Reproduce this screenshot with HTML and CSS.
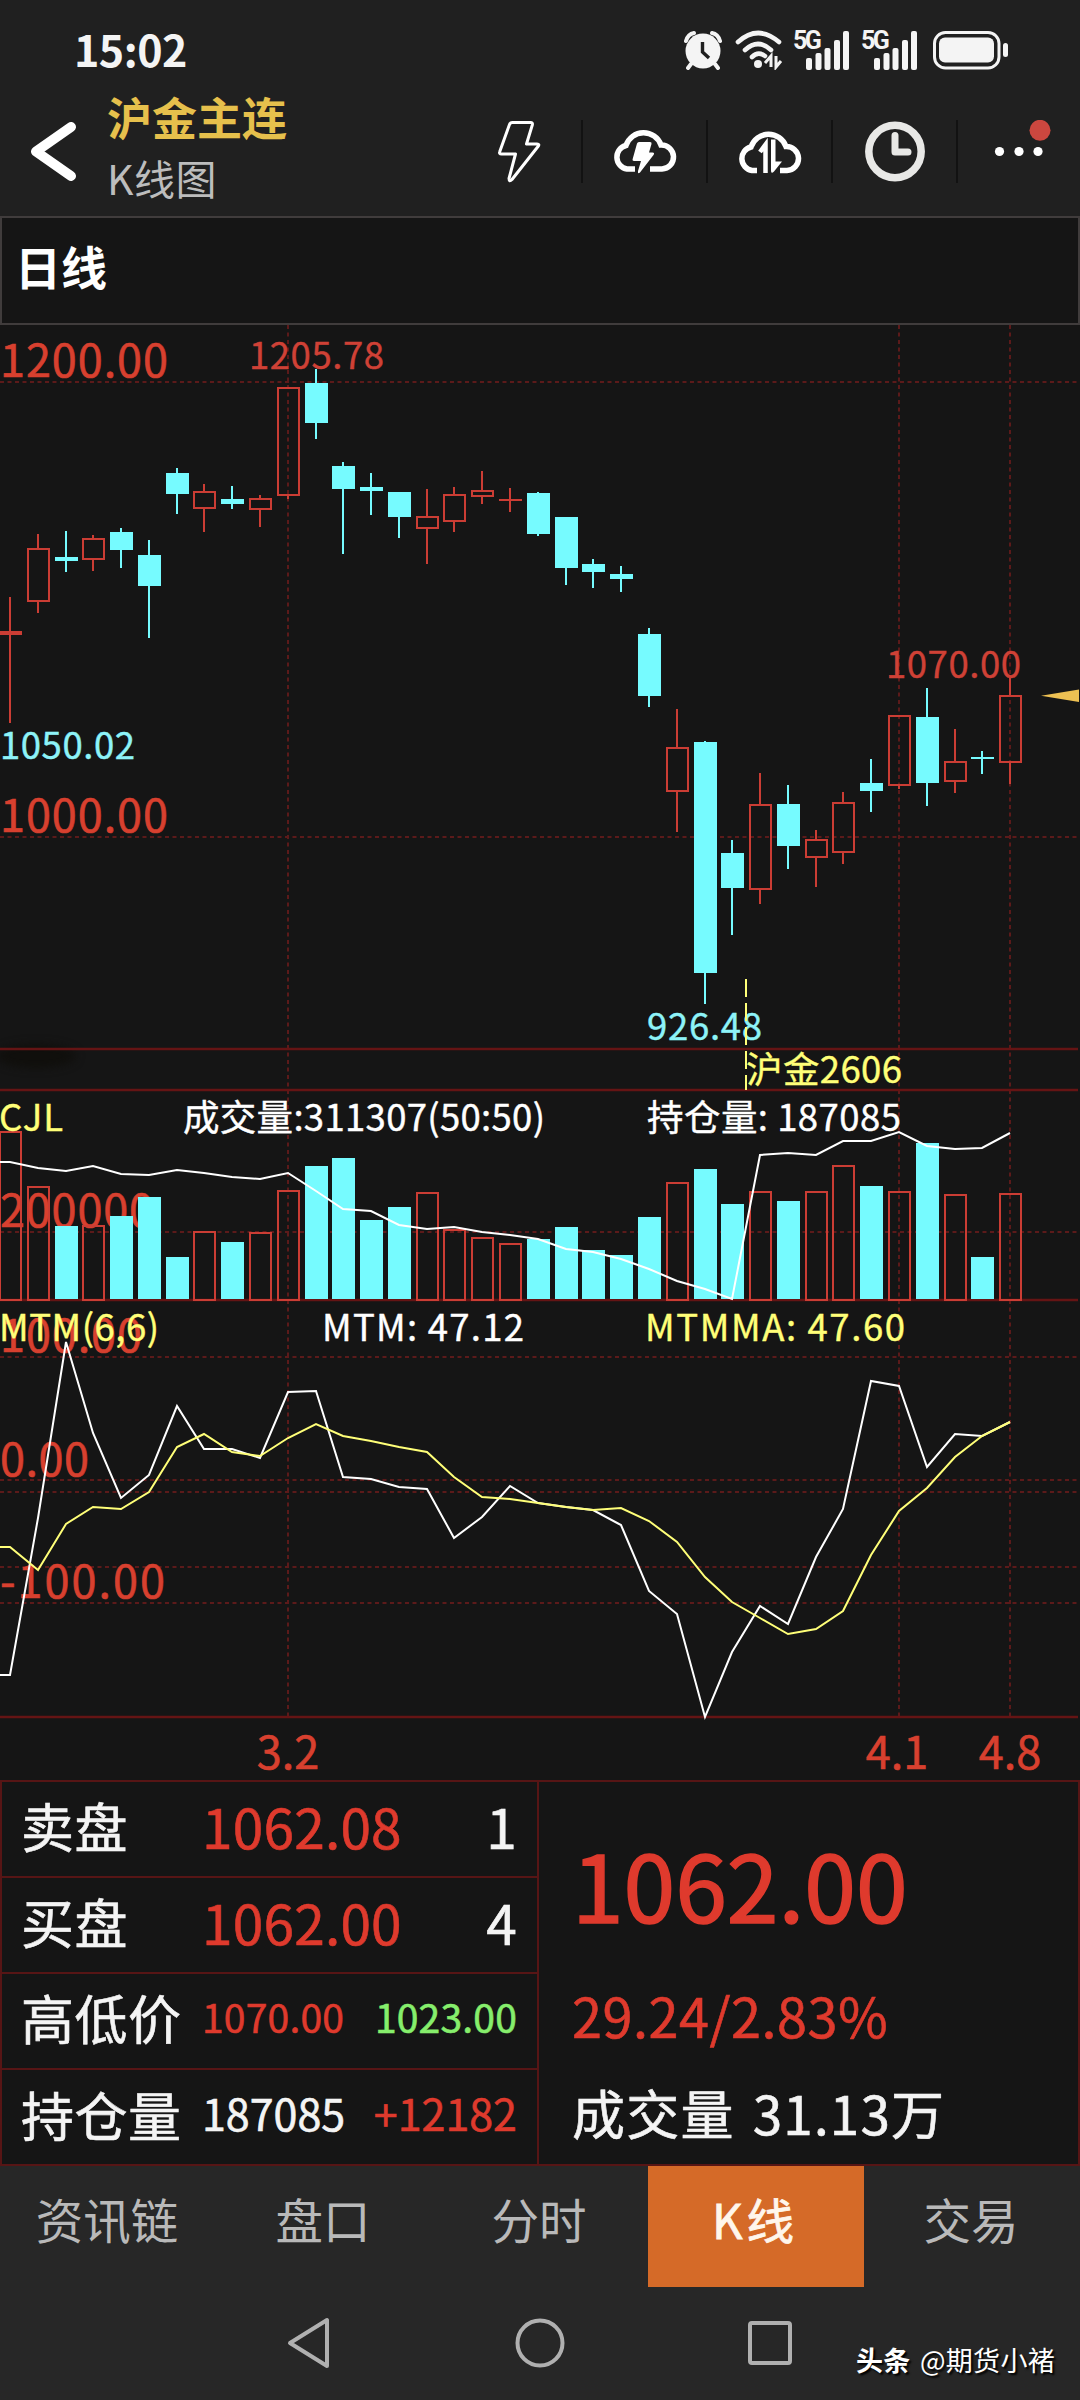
FILE: index.html
```html
<!DOCTYPE html>
<html lang="zh-CN">
<head>
    <meta charset="UTF-8">
    <meta name="viewport" content="width=device-width, initial-scale=1.0">
    <title>沪金主连 K线图</title>
    <link rel="stylesheet" href="styles.css">
</head>
<body>

    <!-- 状态栏 -->
    <div class="status-bar">
        <span class="time">15:02</span>
        <div class="status-icons">
            <svg class="alarm" width="38" height="40" viewBox="0 0 38 40">
                <circle cx="19" cy="21" r="17.5" fill="#f4f4f4"/>
                <path d="M2 11 Q4 4 10 3 M36 11 Q34 4 28 3" stroke="#f4f4f4" stroke-width="4" fill="none" stroke-linecap="round"/>
                <path d="M7 34 L4 38 M31 34 L34 38" stroke="#f4f4f4" stroke-width="4" stroke-linecap="round"/>
                <path d="M18.5 12 V22 L25 28" stroke="#202020" stroke-width="3.4" fill="none"/>
            </svg>
            <svg class="wifi" width="48" height="40" viewBox="0 0 48 40">
                <g fill="none" stroke="#f4f4f4" stroke-width="4.6" stroke-linecap="round">
                    <path d="M3 12 Q23 -6 44 12"/>
                    <path d="M10 20 Q23 8 36 20"/>
                    <path d="M17 27 Q23 21 30 26"/>
                </g>
                <circle cx="23" cy="34" r="4" fill="#f4f4f4"/>
                <path d="M30 33 L36 26 V37 M41 26 V37 L46 31" stroke="#f4f4f4" stroke-width="3" fill="none"/>
            </svg>
            <div class="signal">
                <span>5G</span>
                <svg width="44" height="40" viewBox="0 0 44 40" fill="#f4f4f4">
                    <rect x="0" y="28" width="6" height="12" rx="2"/>
                    <rect x="9.5" y="23" width="6" height="17" rx="2"/>
                    <rect x="18.5" y="18" width="6" height="22" rx="2"/>
                    <rect x="28" y="10" width="6" height="30" rx="2"/>
                    <rect x="37" y="1" width="6" height="39" rx="2"/>
                </svg>
            </div>
            <div class="signal">
                <span>5G</span>
                <svg width="44" height="40" viewBox="0 0 44 40" fill="#f4f4f4">
                    <rect x="0" y="28" width="6" height="12" rx="2"/>
                    <rect x="9.5" y="23" width="6" height="17" rx="2"/>
                    <rect x="18.5" y="18" width="6" height="22" rx="2"/>
                    <rect x="28" y="10" width="6" height="30" rx="2"/>
                    <rect x="37" y="1" width="6" height="39" rx="2"/>
                </svg>
            </div>
            <svg class="battery" width="76" height="40" viewBox="0 0 76 40">
                <rect x="1.5" y="2.5" width="64.5" height="35.5" rx="11" fill="none" stroke="#f4f4f4" stroke-width="3"/>
                <rect x="6" y="7.5" width="55" height="25" rx="6" fill="#f4f4f4"/>
                <rect x="70" y="13" width="5" height="14" rx="2.5" fill="#f4f4f4"/>
            </svg>
        </div>
    </div>

    <!-- 标题栏 -->
    <header class="header">
        <svg class="back" width="48" height="64" viewBox="0 0 48 64">
            <path d="M41 7 L6 31.500 L41 56" fill="none" stroke="#fff" stroke-width="10" stroke-linecap="round" stroke-linejoin="round"/>
        </svg>
        <div class="title">
            <h1>沪金主连</h1>
            <p>K线图</p>
        </div>
        <div class="tools">
            <div class="tool">
                <svg width="44" height="64" viewBox="0 0 44 64">
                    <path d="M14.500 2.500 H32.500 Q35 2.500 34.300 5 L28.500 24 H39 Q42 24 40 26.500 L14 59.500 Q11 62.500 11 58.500 L17.500 34 H3.500 Q0.800 34 1.800 31.500 L11.500 4.500 Q12.200 2.500 14.500 2.500 Z" fill="none" stroke="#fff" stroke-width="3" stroke-linejoin="round"/>
                </svg>
            </div>
            <div class="tool">
                <svg width="64" height="64" viewBox="1 1.500 64 64">
                    <path d="M23 50.500 H15 A12 12 0 0 1 14 27 A18.500 18.500 0 0 1 49 26.500 A12 12 0 0 1 50 50.500 H38" fill="none" stroke="#fff" stroke-width="5.500"/>
                    <path d="M27 23.500 H38 Q40 23.500 39.500 25.500 L37 34 H40.500 Q43 34 41.500 36.500 L28 54 Q25.500 56 26 52.500 L29 42.500 H22 Q20 42.500 20.800 40 L25 25 Q25.500 23.500 27 23.500 Z" fill="#fff"/>
                </svg>
            </div>
            <div class="tool">
                <svg width="64" height="64" viewBox="1 1.500 64 64">
                    <path d="M20 52 H15 A12 12 0 0 1 14 28.500 A18.500 18.500 0 0 1 49 28 A12 12 0 0 1 50 52 H43" fill="none" stroke="#fff" stroke-width="5.500"/>
                    <path d="M23 33.500 L28.500 26 V54.500" fill="none" stroke="#fff" stroke-width="4.500"/>
                    <path d="M34 21 H38.500 V43 H45 L37 53 Q34 56 34 52 Z" fill="#fff"/>
                </svg>
            </div>
            <div class="tool">
                <svg width="64" height="64" viewBox="0 0.500 64 64">
                    <circle cx="32" cy="32" r="26.200" fill="none" stroke="#e8e8e6" stroke-width="7.500"/>
                    <path d="M32 16 V32.500 H45" fill="none" stroke="#e8e8e6" stroke-width="7" stroke-linecap="round" stroke-linejoin="round"/>
                </svg>
            </div>
            <div class="tool">
                <svg width="84" height="64" viewBox="-0.500 1 84 64">
                    <circle cx="22" cy="32.500" r="4.600" fill="#fff"/>
                    <circle cx="41.500" cy="32.500" r="4.600" fill="#fff"/>
                    <circle cx="60.500" cy="32.500" r="4.600" fill="#fff"/>
                    <circle cx="62.500" cy="11.300" r="10.500" fill="#cc473f"/>
                </svg>
            </div>
        </div>
    </header>

    <div class="period">日线</div>

    <!-- K线 / 成交量 / MTM -->
    <svg class="chart" id="chart" width="1080" height="1455" viewBox="0 325 1080 1455">
        <ellipse class="smudge" cx="36" cy="1056" rx="40" ry="12"/>
        <g id="grid"></g>
        <g class="axis">
            <text x="0" y="377" textLength="168">1200.00</text>
            <text x="0" y="832" textLength="168">1000.00</text>
            <text x="0" y="1227" textLength="154">200000</text>
            <text x="0" y="1352" textLength="142">100.00</text>
            <text x="0" y="1476" textLength="89">0.00</text>
            <text x="0" y="1598" textLength="165">-100.00</text>
            <text x="288" y="1769" text-anchor="middle">3.2</text>
            <text x="897" y="1769" text-anchor="middle">4.1</text>
            <text x="1010" y="1769" text-anchor="middle">4.8</text>
        </g>
        <g class="label">
            <text class="red" x="249" y="368.500" textLength="135">1205.78</text>
            <text class="red" x="886" y="677.500" textLength="135">1070.00</text>
            <text class="cyan" x="0" y="759" textLength="135">1050.02</text>
            <text class="cyan" x="647" y="1040" textLength="115">926.48</text>
        </g>
        <g id="bars"></g>
        <line class="switch" x1="746" y1="979" x2="746" y2="1090"/>
        <path class="pointer" d="M1041 695.700 L1079 689.500 V702 Z"/>
        <g class="label">
            <text class="yellow" x="746" y="1083" textLength="156">沪金2606</text>
            <text class="yellow" x="-1" y="1131" textLength="64">CJL</text>
            <text class="white" x="183" y="1131" textLength="362">成交量:311307(50:50)</text>
            <text class="white" x="647" y="1131" textLength="254">持仓量: 187085</text>
            <text class="yellow" x="-1" y="1341" textLength="160">MTM(6,6)</text>
            <text class="white" x="322" y="1341" textLength="202">MTM: 47.12</text>
            <text class="yellow" x="645" y="1341" textLength="260">MTMMA: 47.60</text>
        </g>
        <g id="lines"></g>
    </svg>

    <!-- 盘口报价 -->
    <div class="quote">
        <div class="quote-left">
            <div class="row">
                <span class="name">卖盘</span>
                <span class="price red">1062.08</span>
                <span class="price end">1</span>
            </div>
            <div class="row">
                <span class="name">买盘</span>
                <span class="price red">1062.00</span>
                <span class="price end">4</span>
            </div>
            <div class="row">
                <span class="name">高低价</span>
                <span class="small red">1070.00</span>
                <span class="small end green">1023.00</span>
            </div>
            <div class="row">
                <span class="name">持仓量</span>
                <span class="middle">187085</span>
                <span class="middle end red">+12182</span>
            </div>
        </div>
        <div class="quote-right">
            <div class="last red">1062.00</div>
            <div class="change red">29.24/2.83%</div>
            <div class="volume">成交量 31.13万</div>
        </div>
    </div>

    <nav class="tabs">
        <a>资讯链</a>
        <a>盘口</a>
        <a>分时</a>
        <a class="active">K线</a>
        <a>交易</a>
    </nav>

    <div class="system-nav">
        <svg width="48" height="54" viewBox="0 0 48 54">
            <path d="M42 4 V50 L5 27 Z"/>
        </svg>
        <svg width="54" height="54" viewBox="0 0 54 54">
            <circle cx="27" cy="27" r="22.500"/>
        </svg>
        <svg width="48" height="54" viewBox="0 0 48 54">
            <rect x="4" y="7" width="40" height="40" rx="2"/>
        </svg>
        <div class="watermark"><b>头条</b> @期货小褚</div>
    </div>

    <script src="script.js"></script>
</body>
</html>
```
FILE: styles.css
```css
* {
    box-sizing: border-box;
}

body {
    font-family: 'Noto Sans CJK SC', 'Noto Sans', sans-serif;
    background-color: #151515;
    color: #f4f4f4;
    margin: 0;
    width: 1080px;
    height: 2400px;
    overflow: hidden;
}

svg {
    display: block;
    flex: none;
}

h1, p {
    margin: 0;
}

.red {
    color: #df3a2d;
}

.green {
    color: #86ee6c;
}

/* 状态栏 */
.status-bar {
    height: 88px;
    padding: 30px 71px 0 74px;
    display: flex;
    justify-content: space-between;
    background-color: #202020;
}

.time {
    margin-top: -3px;
    font-size: 43px;
    font-weight: 700;
    line-height: 42px;
    letter-spacing: -0.5px;
}

.status-icons {
    display: flex;
    height: 40px;
}

.alarm {
    margin-right: 13px;
}

.wifi {
    margin-right: 10px;
}

.signal {
    position: relative;
    width: 57px;
    margin-right: 11px;
    display: flex;
    justify-content: flex-end;
}

.signal span {
    position: absolute;
    left: 0;
    top: 0;
    font-family: 'Roboto', sans-serif;
    font-size: 25px;
    font-weight: 700;
    line-height: 22px;
    letter-spacing: -2.5px;
}

.battery {
    margin-left: 4px;
}

/* 标题栏 */
.header {
    height: 128px;
    padding-left: 30px;
    display: flex;
    background-color: #202020;
}

.back {
    margin-top: 32px;
    margin-right: 29px;
}

.title h1 {
    color: #e6c04c;
    font-size: 45px;
    font-weight: 700;
    line-height: 58px;
}

.title p {
    color: #bdbdbd;
    font-size: 41px;
    line-height: 62px;
    letter-spacing: 0.5px;
}

.tools {
    display: flex;
    margin-left: auto;
    padding-top: 32px;
}

.tool {
    width: 125px;
    height: 63px;
    display: flex;
    justify-content: center;
    border-right: 2px solid #121212;
}

.tool:last-child {
    width: 122px;
    border-right: none;
}

.period {
    height: 109px;
    padding-left: 13px;
    border: 2px solid #403c3c;
    font-size: 46px;
    font-weight: 700;
    line-height: 95px;
    color: #fff;
}

/* 图表 */
.chart {
    overflow: visible;
}

.chart .smudge {
    fill: #100f0c;
    filter: blur(4px);
}

.grid-dash {
    stroke: #5c1a1a;
    stroke-width: 2;
    stroke-dasharray: 4 3.5;
}

.grid-line {
    stroke: #651414;
    stroke-width: 2.5;
}

.axis text {
    font-size: 45px;
    fill: #d8402f;
    stroke: #d8402f;
    stroke-width: 0.6px;
}

.label text {
    font-size: 36.5px;
    stroke-width: 0.4px;
}

.label .red {
    fill: #cf4136;
    stroke: #cf4136;
}

.label .cyan {
    fill: #8df3f8;
    stroke: #8df3f8;
}

.label .yellow {
    fill: #ffff78;
    stroke: #ffff78;
}

.label .white {
    fill: #fff;
    stroke: #fff;
}

.up {
    fill: none;
    stroke: #cb3d34;
    stroke-width: 2;
}

.down {
    fill: #76fbff;
}

.down-wick {
    stroke: #76fbff;
    stroke-width: 2;
}

.switch {
    stroke: #ffff78;
    stroke-width: 2;
    stroke-dasharray: 18 6;
}

.pointer {
    fill: #edc053;
}

.line-white,
.line-yellow {
    fill: none;
    stroke: #fff;
    stroke-width: 2;
}

.line-yellow {
    stroke: #ffff78;
}

/* 报价 */
.quote {
    height: 386px;
    display: flex;
    border: 2px solid #571515;
    -webkit-text-stroke: 0.6px;
}

.quote-left {
    width: 537px;
    border-right: 2px solid #571515;
}

.row {
    height: 96px;
    padding: 0 20px 9px 19px;
    display: flex;
    align-items: center;
    border-bottom: 2px solid #571515;
}

.row:last-child {
    border-bottom: none;
}

.name {
    width: 181px;
    font-size: 53px;
    line-height: 84px;
    letter-spacing: 0.5px;
}

.price {
    font-size: 55px;
    line-height: 84px;
    letter-spacing: 0.2px;
}

.middle {
    font-size: 43px;
    line-height: 84px;
    position: relative;
    top: -2px;
}

.small {
    font-size: 39px;
    line-height: 84px;
    letter-spacing: 0.2px;
    position: relative;
    top: -1px;
}

.end {
    margin-left: auto;
}

.quote-right {
    padding-left: 33px;
}

.last {
    margin-top: 31px;
    font-size: 93px;
    line-height: 140px;
    -webkit-text-stroke: 1.6px;
}

.change {
    margin-top: 22px;
    font-size: 54px;
    line-height: 80px;
    letter-spacing: 0.5px;
}

.volume {
    margin-top: 17px;
    font-size: 53px;
    line-height: 80px;
    letter-spacing: 1.2px;
    word-spacing: 5px;
}

/* 底部 */
.tabs {
    height: 121px;
    display: flex;
    background-color: #272727;
}

.tabs a {
    flex: 1;
    padding-right: 2px;
    color: #b9b9b9;
    font-size: 47.5px;
    line-height: 105px;
    text-align: center;
}

.tabs .active {
    background-color: #d56a28;
    color: #fff6ec;
    letter-spacing: 4px;
    -webkit-text-stroke: 0.8px;
}

.system-nav {
    position: relative;
    height: 114px;
    padding: 29px 286px 0 285px;
    display: flex;
    justify-content: space-between;
    background-color: #272727;
}

.system-nav svg {
    fill: none;
    stroke: #b0b0b0;
    stroke-width: 4;
    stroke-linejoin: round;
}

.watermark {
    position: absolute;
    right: 25px;
    bottom: 21px;
    font-size: 27px;
    line-height: 40px;
    letter-spacing: 0.3px;
    word-spacing: 3px;
    color: #fff;
    text-shadow: 2px 2px 2px #000;
}
```
FILE: script.js
```javascript
const STEP = 27.78;
const BASE = 1300;
const chart = {
    grid: document.getElementById('grid'),
    bars: document.getElementById('bars'),
    lines: document.getElementById('lines')
};

// [涨跌, 最高, 实体上沿, 实体下沿, 最低, 成交量柱顶]
const candles = [
    [1, 597, 632, 634, 723, 1132], [1, 534, 549, 601, 613, 1187],
    [0, 531, 557, 561, 572, 1226], [1, 535, 539, 559, 571, 1226],
    [0, 528, 532, 550, 568, 1216], [0, 540, 555, 586, 638, 1197],
    [0, 468, 473, 494, 514, 1257], [1, 484, 492, 508, 532, 1232],
    [0, 486, 499, 504, 509, 1242], [1, 495, 499, 509, 527, 1233],
    [1, 388, 388, 495, 499, 1191], [0, 369, 383, 423, 439, 1166],
    [0, 462, 466, 489, 554, 1158], [0, 473, 487, 491, 515, 1220],
    [0, 492, 492, 517, 538, 1207], [1, 489, 517, 528, 564, 1193],
    [1, 487, 495, 521, 532, 1230], [1, 471, 491, 496, 504, 1238],
    [1, 488, 500, 500, 512, 1244], [0, 492, 493, 534, 536, 1239],
    [0, 517, 517, 568, 585, 1227], [0, 559, 564, 572, 588, 1250],
    [0, 566, 574, 579, 592, 1255], [0, 628, 634, 696, 707, 1217],
    [1, 709, 748, 791, 832, 1183], [0, 741, 742, 973, 1004, 1169],
    [0, 840, 853, 888, 935, 1204], [1, 773, 805, 889, 904, 1192],
    [0, 785, 804, 846, 869, 1201], [1, 830, 840, 857, 887, 1192],
    [1, 792, 803, 852, 864, 1166], [0, 759, 783, 791, 812, 1186],
    [1, 716, 716, 785, 789, 1192], [0, 688, 717, 783, 806, 1143],
    [1, 729, 762, 781, 793, 1195], [0, 751, 757, 759, 774, 1257],
    [1, 677, 696, 762, 784, 1194]
];

// 持仓量
const hold = [1162, 1168, 1171, 1166, 1174, 1175, 1170, 1173, 1177, 1179, 1173, 1191, 1209,
    1211, 1225, 1229, 1227, 1232, 1235, 1239, 1249, 1252, 1259, 1269, 1281, 1289, 1299,
    1155, 1153, 1155, 1141, 1141, 1132, 1146, 1149, 1148, 1133];

const mtm = [1675, 1518, 1342, 1433, 1498, 1475, 1406, 1449, 1449, 1458, 1392, 1391, 1477,
    1479, 1487, 1489, 1538, 1517, 1486, 1503, 1507, 1510, 1525, 1591, 1614, 1717, 1652,
    1606, 1624, 1557, 1509, 1381, 1386, 1467, 1434, 1436, 1422];

const mtmma = [1547, 1570, 1524, 1507, 1509, 1492, 1447, 1434, 1452, 1456, 1438, 1424, 1436,
    1441, 1447, 1452, 1477, 1497, 1499, 1503, 1507, 1510, 1508, 1521, 1542, 1577, 1602,
    1618, 1634, 1629, 1611, 1555, 1511, 1488, 1457, 1436, 1422];

function xAt(i) {
    return Math.round(10 + i * STEP);
}

function line(cls, x1, y1, x2, y2) {
    return `<line class="${cls}" x1="${x1}" y1="${y1}" x2="${x2}" y2="${y2}"/>`;
}

function rect(cls, x, y, w, h) {
    return `<rect class="${cls}" x="${x}" y="${y}" width="${w}" height="${h}"/>`;
}

function polyline(cls, data) {
    const points = data.map((y, i) => `${xAt(i)},${y}`).join(' ');
    return `<polyline class="${cls}" points="0,${data[0]} ${points}"/>`;
}

// 网格
let grid = '';
[382, 837, 1232, 1357, 1480, 1492, 1567, 1603].forEach(y => {
    grid += line('grid-dash', 0, y, 1080, y);
});
[10, 32, 36].forEach(i => {
    grid += line('grid-dash', xAt(i), 325, xAt(i), 1717);
});
[1049, 1090, 1300, 1717].forEach(y => {
    grid += line('grid-line', 0, y, 1078, y);
});
chart.grid.innerHTML = grid;

// 蜡烛和成交量柱
let bars = '';
candles.forEach(([up, high, top, bottom, low, vol], i) => {
    const x = xAt(i);
    if (up) {
        bars += line('up', x, high, x, top) + line('up', x, bottom, x, low);
        // 十字星只画一条横线
        bars += top === bottom
            ? line('up', x - 11, top, x + 12, top)
            : rect('up', x - 10, top, 21, bottom - top);
        bars += rect('up', x - 10, vol, 21, BASE - vol);
    } else {
        bars += line('down-wick', x, high, x, low);
        bars += rect('down', x - 11, top, 23, bottom - top);
        bars += rect('down', x - 11, vol, 23, BASE - 1 - vol);
    }
});
chart.bars.innerHTML = bars;

chart.lines.innerHTML = polyline('line-white', hold)
    + polyline('line-white', mtm)
    + polyline('line-yellow', mtmma);
```
